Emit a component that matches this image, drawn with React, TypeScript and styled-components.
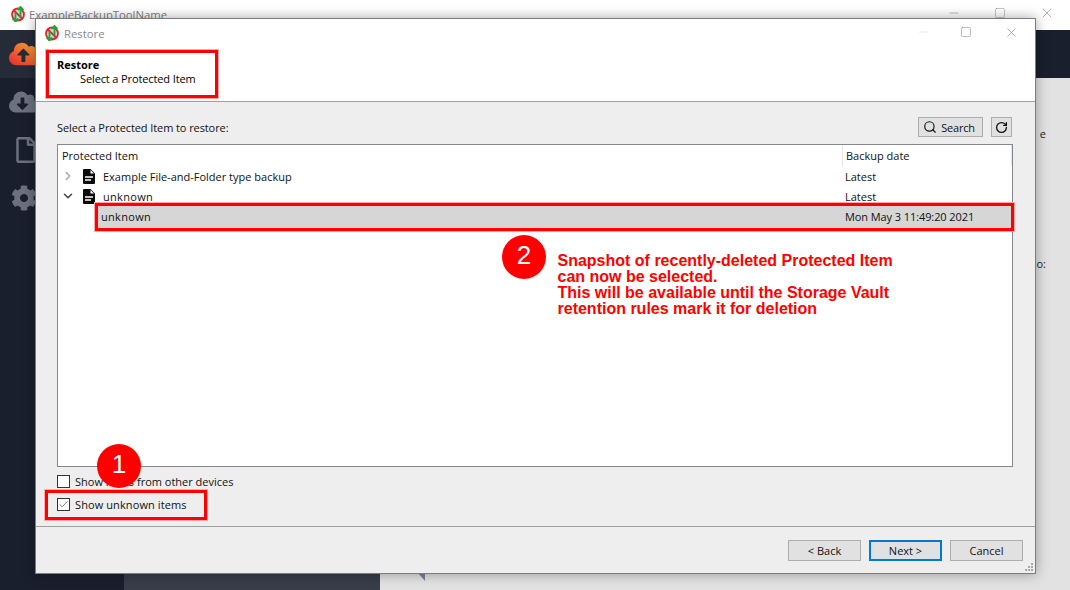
import React from "react";
import styled, { createGlobalStyle } from "styled-components";
import { ChevronRight, ChevronDown, Search, RotateCw, Check, Minus, Square, X } from "lucide-react";
import { FaCloudUploadAlt, FaCloudDownloadAlt, FaRegFile, FaCog } from "react-icons/fa";

const Global = createGlobalStyle`
  html, body { margin: 0; padding: 0; width: 1070px; height: 590px; overflow: hidden; background: #e2e2e2; }
  * { box-sizing: border-box; }
  body { font-family: "Open Sans", "Noto Sans", sans-serif; font-size: 11px; color: #1a1a1a; }
`;

const Desktop = styled.div`
  position: relative;
  width: 1070px;
  height: 590px;
  display: grid;
  grid-template-columns: 124px 1fr;
  grid-template-rows: 30px 48px 1fr;
  overflow: hidden;
`;

const AppTitleBar = styled.div`
  grid-column: 1 / 3;
  background: #fff;
  display: flex;
  align-items: center;
  padding: 0 0 2px 10px;
  gap: 3px;
  color: #7d7d7d;
  font-size: 11.3px;
`;

const AppControls = styled.div`
  margin-left: auto;
  display: flex;
  align-items: center;
  gap: 33px;
  padding: 0 15px 2px 0;
  color: #8a8a8a;
`;

const Sidebar = styled.nav`
  grid-column: 1;
  grid-row: 2 / 4;
  background: #1a1f2d;
  display: flex;
  flex-direction: column;
`;

const SideItem = styled.div<{ $active?: boolean }>`
  height: 48px;
  flex: none;
  display: flex;
  align-items: center;
  padding-left: 9px;
  color: #6c7180;
  background: ${(p) => (p.$active ? "#262b38" : "transparent")};
`;

const SideFile = styled(SideItem)`
  height: 44px;
  padding-left: 13px;
  margin-top: 2px;
`;

const SideGear = styled(SideItem)`
  height: 52px;
  padding-left: 11px;
`;

const AppHeader = styled.header`
  grid-column: 2;
  grid-row: 2;
  background: #1a1f2d;
`;

const AppContent = styled.main`
  grid-column: 2;
  grid-row: 3;
  background: #e2e2e2;
  display: flex;
  justify-content: space-between;
`;

const LeftPanel = styled.div`
  width: 256px;
  background: #393d49;
  display: flex;
  align-items: flex-end;
  justify-content: center;
  padding-bottom: 13px;
  color: #aeb3be;
  font-size: 13px;
  font-weight: 600;
  letter-spacing: 0.4px;
`;

const BehindLabels = styled.div`
  display: flex;
  flex-direction: column;
  align-items: flex-end;
  padding: 49px 24px 0 0;
  font-size: 11px;
  color: #222;
  line-height: 14px;
`;

const BehindGap = styled.span`
  height: 116px;
`;

const Notch = styled.i`
  position: absolute;
  left: 418px;
  top: 573px;
  width: 7px;
  height: 8px;
  background: #7b8290;
  clip-path: polygon(0 0, 100% 0, 100% 100%);
`;

const Dialog = styled.section`
  position: absolute;
  left: 35px;
  top: 18px;
  width: 1001px;
  height: 556px;
  background: #eeeeee;
  border: 1px solid #7d7d7d;
  box-shadow: 0 0 12px rgba(0, 0, 0, 0.35);
  display: flex;
  flex-direction: column;
`;

const DialogTitle = styled.div`
  height: 28px;
  flex: none;
  background: #fff;
  display: flex;
  align-items: center;
  padding: 0 0 0 8px;
  gap: 4px;
  color: #8a8a8a;
  font-size: 11.3px;
`;

const DialogControls = styled.div`
  margin-left: auto;
  display: flex;
  align-items: center;
  padding: 0 16px 2px 0;
  color: #7d7d7d;
`;

const MinIcon = styled(Minus)`
  color: #dcdcdc;
  margin-right: 30px;
`;

const MaxIcon = styled(Square)`
  margin-right: 32px;
`;

const DialogHead = styled.div`
  height: 55px;
  flex: none;
  background: #fff;
  border-bottom: 1px solid #a0a0a0;
  padding: 3px 0 0 10px;
`;

const HeadFrame = styled.div`
  width: 172px;
  height: 48px;
  border: 3px solid #f00;
  outline: 1px solid #ffa8a8;
  padding: 5px 0 0 8px;
  line-height: 14px;
`;

const HeadTitle = styled.div`
  font-weight: 700;
  color: #000;
`;

const HeadSub = styled.div`
  padding-left: 23px;
  color: #000;
  letter-spacing: -0.12px;
`;

const Body = styled.div`
  flex: 1;
  display: flex;
  flex-direction: column;
  padding: 15px 22px 0 21px;
  min-height: 0;
`;

const Toolbar = styled.div`
  height: 20px;
  display: flex;
  align-items: center;
  gap: 8px;
  margin-bottom: 7px;
  padding-right: 1px;
`;

const ToolLabel = styled.span`
  margin-right: auto;
  color: #111;
  letter-spacing: -0.09px;
`;

const Button = styled.button<{ $primary?: boolean }>`
  width: 73px;
  height: 21px;
  background: #e1e1e1;
  border: ${(p) => (p.$primary ? "2px solid #0078d7" : "1px solid #adadad")};
  font: inherit;
  color: #111;
  padding: 0;
  display: flex;
  align-items: center;
  justify-content: center;
`;

const SearchButton = styled(Button)`
  width: 65px;
  height: 20px;
  gap: 4px;
  letter-spacing: -0.2px;
  padding-right: 3px;
`;

const RefreshButton = styled(Button)`
  width: 21px;
  height: 20px;
`;

const Tree = styled.div`
  height: 323px;
  background: #fff;
  border: 1px solid #828790;
  position: relative;
  flex: none;
`;

const HeaderRow = styled.div`
  height: 21px;
  display: grid;
  grid-template-columns: 784px 170px;
  line-height: 21px;
`;

const HeadCell = styled.div`
  padding-left: 4px;
  color: #111;
  & + & {
    border-left: 1px solid #e5e5e5;
    border-right: 1px solid #e5e5e5;
    padding-left: 3px;
  }
`;

const Row = styled.div`
  height: 20px;
  display: grid;
  grid-template-columns: 784px 170px;
  align-items: center;
`;

const NameCell = styled.div`
  display: flex;
  align-items: center;
  padding-left: 3px;
  color: #111;
`;

const IconSlot = styled.span`
  width: 17px;
  display: flex;
  color: #a8a8a8;
`;

const DarkSlot = styled(IconSlot)`
  color: #444;
`;

const DocSlot = styled.span`
  width: 25px;
  display: flex;
  padding-left: 5px;
`;

const DateCell = styled.div`
  padding-left: 3px;
  color: #111;
`;

const UnknownLabel = styled.span`
  letter-spacing: 0.3px;
`;

const SelectedRow = styled(Row)`
  position: absolute;
  top: 58px;
  left: 37px;
  width: 919px;
  height: 28px;
  padding-bottom: 2px;
  grid-template-columns: 744px 170px;
  background: #d6d6d6;
  border: 3px solid #f00;
  outline: 1px solid #ffa8a8;
`;

const SelectedName = styled.div`
  padding-left: 3px;
  color: #111;
  letter-spacing: 0.3px;
`;

const SelectedDate = styled(DateCell)`
  letter-spacing: -0.09px;
`;

const Options = styled.div`
  position: relative;
  display: flex;
  flex-direction: column;
  padding-top: 7px;
`;

const OptionRow = styled.label`
  height: 15px;
  display: flex;
  align-items: center;
  gap: 5px;
  color: #111;
`;

const Frame = styled.div`
  margin: 1px 0 0 -12px;
  width: 162px;
  height: 30px;
  border: 3px solid #f00;
  outline: 1px solid #ffa8a8;
  padding: 4px 0 0 9px;
`;

const WideLabel = styled.span`
  letter-spacing: 0.1px;
`;

const Box = styled.span`
  width: 13px;
  height: 13px;
  background: #fff;
  border: 1px solid #333;
  flex: none;
  display: flex;
  align-items: center;
  justify-content: center;
  color: #444;
`;

const Footer = styled.div`
  height: 47px;
  flex: none;
  margin-top: auto;
  border-top: 1px solid #a0a0a0;
  display: flex;
  justify-content: flex-end;
  gap: 8px;
  padding: 13px 12px 0 0;
  position: relative;
`;

const Grip = styled.svg`
  position: absolute;
  right: 1px;
  bottom: 1px;
`;

const Bubble = styled.div<{ $x: number; $y: number }>`
  position: absolute;
  left: ${(p) => p.$x}px;
  top: ${(p) => p.$y}px;
  width: 44px;
  height: 44px;
  border-radius: 50%;
  background: #f00;
  color: #fff;
  font: 26px/41px "Liberation Sans", Arial, sans-serif;
  text-align: center;
`;

const Note = styled.div`
  position: absolute;
  left: 557.5px;
  top: 253px;
  width: 345px;
  font: 700 16px/16px "Liberation Sans", Arial, sans-serif;
  color: #f00;
`;

const Logo = () => (
  <svg width="16" height="16" viewBox="0 0 16 16">
    <circle cx="8" cy="8.5" r="6" fill="#bfe0f2" stroke="#e8232a" strokeWidth="1.8" />
    <path d="M3.5 4l9 9" stroke="#e8232a" strokeWidth="1.8" />
    <path d="M5.5 6v9.5M2.6 12.5l2.9 3 2.9-3" fill="none" stroke="#23a62f" strokeWidth="1.9" />
    <path d="M10.5 10.5V1M7.6 4l2.9-3 2.9 3" fill="none" stroke="#23a62f" strokeWidth="1.9" />
  </svg>
);

const Doc = () => (
  <svg width="12" height="15" viewBox="0 0 12 15">
    <path d="M1 0h6.5L12 4.5V14a1 1 0 0 1-1 1H1a1 1 0 0 1-1-1V1a1 1 0 0 1 1-1z" fill="#0a0a0a" />
    <path d="M7.5 1v3.5H11z" fill="#fff" />
    <path d="M2 8h8M2 11h6" stroke="#fff" strokeWidth="1.5" />
  </svg>
);

export default function App() {
  return (
    <>
      <Global />
      <Desktop>
        <AppTitleBar>
          <Logo />
          <span>ExampleBackupToolName</span>
          <AppControls>
            <Minus size={14} strokeWidth={1} />
            <Square size={12} strokeWidth={1} />
            <X size={16} strokeWidth={1} />
          </AppControls>
        </AppTitleBar>
        <Sidebar>
          <svg width="0" height="0" style={{ position: "absolute" }}>
            <defs>
              <linearGradient id="cloud" x1="0" y1="1" x2="1" y2="0">
                <stop offset="0" stopColor="#e6262f" />
                <stop offset="1" stopColor="#f9b233" />
              </linearGradient>
            </defs>
          </svg>
          <SideItem $active>
            <FaCloudUploadAlt size={32} fill="url(#cloud)" />
          </SideItem>
          <SideItem>
            <FaCloudDownloadAlt size={30} />
          </SideItem>
          <SideFile>
            <FaRegFile size={26} />
          </SideFile>
          <SideGear>
            <FaCog size={26} />
          </SideGear>
        </Sidebar>
        <AppHeader />
        <AppContent>
          <LeftPanel>Add Protected Item</LeftPanel>
          <BehindLabels>
            <span>e</span>
            <BehindGap />
            <span>o:</span>
          </BehindLabels>
        </AppContent>
        <Notch />
        <Dialog>
          <DialogTitle>
            <Logo />
            <span>Restore</span>
            <DialogControls>
              <MinIcon size={14} strokeWidth={1} />
              <MaxIcon size={12} strokeWidth={1} />
              <X size={15} strokeWidth={1} />
            </DialogControls>
          </DialogTitle>
          <DialogHead>
            <HeadFrame>
              <HeadTitle>Restore</HeadTitle>
              <HeadSub>Select a Protected Item</HeadSub>
            </HeadFrame>
          </DialogHead>
          <Body>
            <Toolbar>
              <ToolLabel>Select a Protected Item to restore:</ToolLabel>
              <SearchButton>
                <Search size={14} strokeWidth={2} />
                Search
              </SearchButton>
              <RefreshButton>
                <RotateCw size={13} strokeWidth={2.4} />
              </RefreshButton>
            </Toolbar>
            <Tree>
              <HeaderRow>
                <HeadCell>Protected Item</HeadCell>
                <HeadCell>Backup date</HeadCell>
              </HeaderRow>
              <Row>
                <NameCell>
                  <IconSlot>
                    <ChevronRight size={14} strokeWidth={2.6} />
                  </IconSlot>
                  <DocSlot>
                    <Doc />
                  </DocSlot>
                  Example File-and-Folder type backup
                </NameCell>
                <DateCell>Latest</DateCell>
              </Row>
              <Row>
                <NameCell>
                  <DarkSlot>
                    <ChevronDown size={14} strokeWidth={2.6} />
                  </DarkSlot>
                  <DocSlot>
                    <Doc />
                  </DocSlot>
                  <UnknownLabel>unknown</UnknownLabel>
                </NameCell>
                <DateCell>Latest</DateCell>
              </Row>
              <SelectedRow>
                <SelectedName>unknown</SelectedName>
                <SelectedDate>Mon May 3 11:49:20 2021</SelectedDate>
              </SelectedRow>
            </Tree>
            <Options>
              <OptionRow>
                <Box />
                Show items from other devices
              </OptionRow>
              <Frame>
                <OptionRow>
                  <Box>
                    <Check size={11} strokeWidth={1.5} />
                  </Box>
                  <WideLabel>Show unknown items</WideLabel>
                </OptionRow>
              </Frame>
            </Options>
          </Body>
          <Footer>
            <Button>&lt; Back</Button>
            <Button $primary>Next &gt;</Button>
            <Button>Cancel</Button>
            <Grip width="9" height="9" viewBox="0 0 9 9" fill="#a8a8a8">
              <rect x="6" y="0" width="2" height="2" />
              <rect x="3" y="3" width="2" height="2" />
              <rect x="6" y="3" width="2" height="2" />
              <rect x="0" y="6" width="2" height="2" />
              <rect x="3" y="6" width="2" height="2" />
              <rect x="6" y="6" width="2" height="2" />
            </Grip>
          </Footer>
        </Dialog>
        <Bubble $x={97} $y={444}>1</Bubble>
        <Bubble $x={502} $y={235}>2</Bubble>
        <Note>
          Snapshot of recently-deleted Protected Item
          <br />
          can now be selected.
          <br />
          This will be available until the Storage Vault
          <br />
          retention rules mark it for deletion
        </Note>
      </Desktop>
    </>
  );
}
